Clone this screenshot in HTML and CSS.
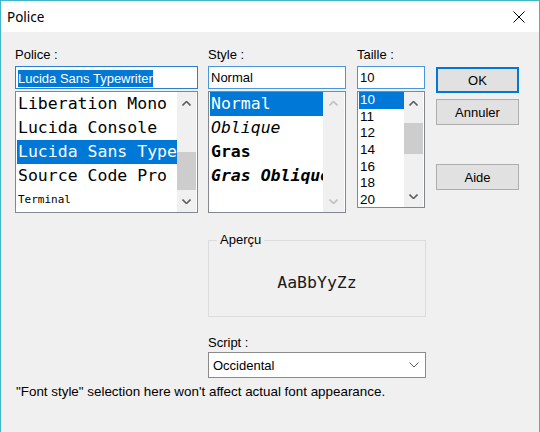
FILE: index.html
```html
<!DOCTYPE html>
<html lang="fr">
<head>
<meta charset="utf-8">
<title>Police</title>
<link rel="stylesheet" href="styles.css">
</head>
<body>
<div class="window">
  <div class="titlebar">
    <span class="title">Police</span>
    <svg class="close" width="12" height="12" viewBox="0 0 12 12"><path d="M0.5 0.5 L11.5 11.5 M11.5 0.5 L0.5 11.5" stroke="#000" stroke-width="1" fill="none"/></svg>
  </div>
  <div class="content">
    <div class="top">
      <div class="col col-font">
        <div class="lbl">Police :</div>
        <div class="edit edit-focus"><span class="sel">Lucida Sans Typewriter</span></div>
        <div class="list list-tall">
          <ul class="items mono">
            <li>Liberation Mono</li>
            <li>Lucida Console</li>
            <li class="selected">Lucida Sans Typewriter</li>
            <li>Source Code Pro</li>
            <li class="small">Terminal</li>
          </ul>
          <div class="sb">
            <div class="sb-btn"><svg class="chev" width="9" height="5" viewBox="0 0 9 5"><polyline points="0.5,4.5 4.5,0.5 8.5,4.5"/></svg></div>
            <div class="sb-track"><div class="sb-thumb thumb-font"></div></div>
            <div class="sb-btn"><svg class="chev" width="9" height="5" viewBox="0 0 9 5"><polyline points="0.5,0.5 4.5,4.5 8.5,0.5"/></svg></div>
          </div>
        </div>
      </div>
      <div class="col col-style">
        <div class="lbl">Style :</div>
        <div class="edit">Normal</div>
        <div class="list list-tall">
          <ul class="items mono">
            <li class="selected">Normal</li>
            <li class="it">Oblique</li>
            <li class="bd">Gras</li>
            <li class="bd it">Gras Oblique</li>
          </ul>
          <div class="sb sb-disabled sb-wide">
            <div class="sb-btn"><svg class="chev" width="9" height="5" viewBox="0 0 9 5"><polyline points="0.5,4.5 4.5,0.5 8.5,4.5"/></svg></div>
            <div class="sb-track"></div>
            <div class="sb-btn"><svg class="chev" width="9" height="5" viewBox="0 0 9 5"><polyline points="0.5,0.5 4.5,4.5 8.5,0.5"/></svg></div>
          </div>
        </div>
      </div>
      <div class="col col-size">
        <div class="lbl">Taille :</div>
        <div class="edit">10</div>
        <div class="list list-size">
          <ul class="items sizes">
            <li class="selected">10</li>
            <li>11</li>
            <li>12</li>
            <li>14</li>
            <li>16</li>
            <li>18</li>
            <li>20</li>
          </ul>
          <div class="sb">
            <div class="sb-btn"><svg class="chev" width="9" height="5" viewBox="0 0 9 5"><polyline points="0.5,4.5 4.5,0.5 8.5,4.5"/></svg></div>
            <div class="sb-track"><div class="sb-thumb thumb-size"></div></div>
            <div class="sb-btn"><svg class="chev" width="9" height="5" viewBox="0 0 9 5"><polyline points="0.5,0.5 4.5,4.5 8.5,0.5"/></svg></div>
          </div>
        </div>
      </div>
      <div class="col col-btn">
        <button class="btn btn-ok">OK</button>
        <button class="btn btn-cancel">Annuler</button>
        <button class="btn btn-help">Aide</button>
      </div>
    </div>
    <div class="lower">
      <fieldset class="preview">
        <legend>Aperçu</legend>
        <div class="preview-text">AaBbYyZz</div>
      </fieldset>
      <div class="lbl script-lbl">Script :</div>
      <div class="combo">
        <span>Occidental</span>
        <svg class="combo-chev" width="10" height="6" viewBox="0 0 10 6"><polyline points="0.5,0.5 5,5 9.5,0.5"/></svg>
      </div>
    </div>
    <div class="note">&quot;Font style&quot; selection here won't affect actual font appearance.</div>
  </div>
</div>
</body>
</html>
```
FILE: styles.css
```css
* { box-sizing: border-box; }
html, body { margin: 0; padding: 0; }
body {
  width: 540px;
  height: 432px;
  overflow: hidden;
  background: #f0f0f0;
  font-family: "Liberation Sans", Arial, sans-serif;
  font-size: 13px;
  color: #000;
}
.window {
  width: 540px;
  height: 432px;
  border: 1px solid #42b7c9;
  border-bottom: 0;
  background: #f0f0f0;
  display: flex;
  flex-direction: column;
}
.titlebar {
  flex: none;
  height: 31px;
  background: #fff;
  display: flex;
  align-items: center;
  justify-content: space-between;
  padding: 0 14px 0 6px;
}
.title {
  font-family: "Noto Sans", "Liberation Sans", sans-serif;
  font-size: 13.5px;
  color: #000;
}
.close { display: block; }
.content {
  padding: 15px 0 0 14px;
}
.top {
  display: flex;
  height: 166px;
}
.col { display: flex; flex-direction: column; }
.col-font { width: 183px; }
.col-style { width: 138px; margin-left: 10px; }
.col-size { width: 68px; margin-left: 11px; }
.col-btn { width: 83px; margin-left: 11px; }
.lbl {
  height: 16px;
  line-height: 16px;
  color: #000;
}
.edit {
  margin-top: 3px;
  height: 23px;
  border: 1px solid #4a96dc;
  background: #fff;
  padding: 0 0 0 2px;
  line-height: 21px;
  white-space: nowrap;
  overflow: hidden;
}
.edit-focus { border-color: #2a7fd4; }
.sel {
  display: inline-block;
  background: #0078d7;
  color: #fff;
  line-height: 17px;
  vertical-align: middle;
}
.list {
  margin-top: 2px;
  border: 1px solid #828790;
  background: #fff;
  display: flex;
  padding: 0 1px;
}
.list-tall { height: 122px; }
.list-size { height: 117px; }
.items {
  flex: 1;
  min-width: 0;
  list-style: none;
  margin: 0;
  padding: 0;
  overflow: hidden;
}
.items li {
  white-space: nowrap;
  overflow: hidden;
}
.mono li {
  font-family: "DejaVu Sans Mono", "Liberation Mono", monospace;
  font-size: 16.5px;
  height: 24px;
  line-height: 24px;
  padding-left: 1px;
}
.mono li.small { font-size: 11px; }
.mono li.it { font-style: italic; }
.mono li.bd { font-weight: bold; }
.sizes li {
  height: 16.67px;
  line-height: 16.67px;
  padding-left: 1px;
  font-size: 13.5px;
}
.selected { background: #0078d7; color: #fff; }
.sb {
  flex: none;
  width: 19px;
  display: flex;
  flex-direction: column;
  background: #f0f0f0;
}
.sb-wide { width: 21px; }
.sb-btn {
  flex: none;
  height: 22px;
  display: flex;
  align-items: center;
  justify-content: center;
}
.sb-track { flex: 1; }
.sb-thumb { background: #cdcdcd; }
.thumb-font { margin-top: 38px; height: 38px; }
.thumb-size { margin-top: 9px; height: 31px; }
.chev { display: block; }
.chev polyline { fill: none; stroke: #606060; stroke-width: 1.6; }
.sb-disabled .chev polyline { stroke: #c0c0c0; }
.btn {
  height: 26px;
  padding: 0;
  margin: 0;
  background: #e1e1e1;
  border: 1px solid #adadad;
  font: inherit;
  color: #000;
  display: flex;
  align-items: center;
  justify-content: center;
}
.btn-ok { margin-top: 20px; border: 2px solid #0078d7; }
.btn-cancel { margin-top: 6px; }
.btn-help { margin-top: 39px; }
.lower {
  margin-left: 193px;
  width: 218px;
}
.preview {
  margin: 19px 0 0;
  padding: 0;
  border: 1px solid #dcdcdc;
}
.preview legend {
  margin-left: 8px;
  padding: 0 3px;
  line-height: 16px;
  font-size: 13px;
}
.preview-text {
  height: 68px;
  display: flex;
  align-items: center;
  justify-content: center;
  font-family: "DejaVu Sans Mono", monospace;
  font-size: 16.5px;
  color: #1a1a1a;
}
.script-lbl { margin-top: 18px; }
.combo {
  margin-top: 1px;
  height: 26px;
  border: 1px solid #8a8a8a;
  background: #fff;
  display: flex;
  align-items: center;
  justify-content: space-between;
  padding: 0 6px 0 4px;
}
.combo-chev { display: block; }
.combo-chev polyline { fill: none; stroke: #606060; stroke-width: 1; }
.note {
  margin-top: 6px;
  line-height: 16px;
  padding-left: 1px;
  font-size: 13.4px;
}
```
